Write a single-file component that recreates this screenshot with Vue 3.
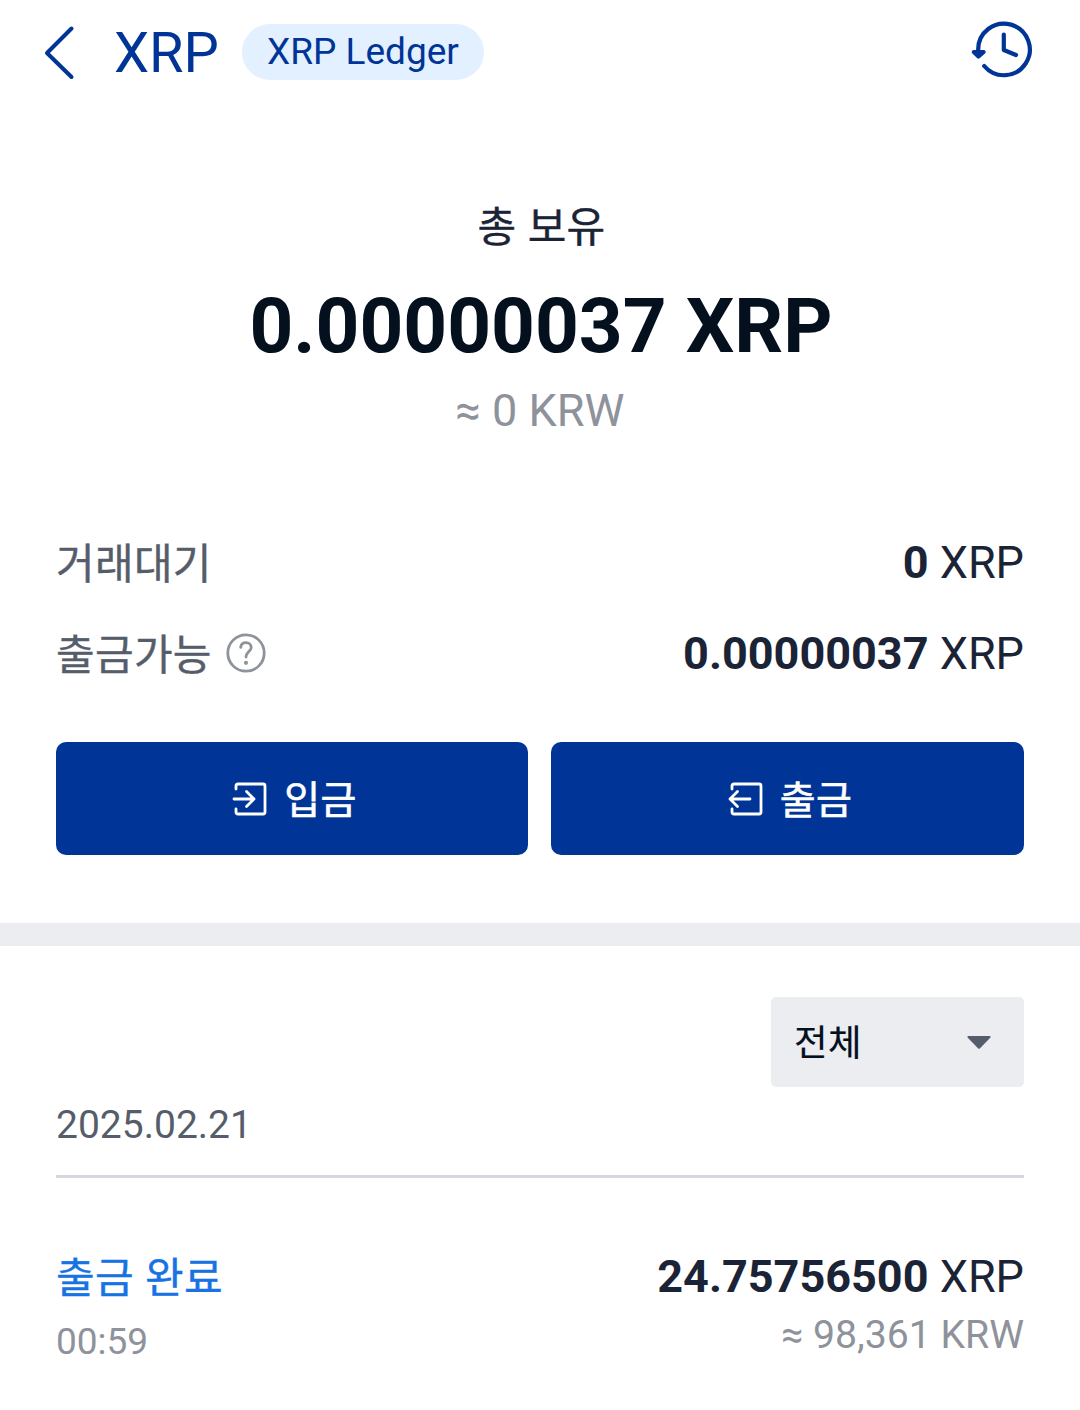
<template>
  <div class="wallet">
    <header class="header">
      <svg class="back" width="32" height="56" viewBox="0 0 32 56">
        <path d="M27.5 4.5 3 29 27.5 53" />
      </svg>
      <h1 class="title">{{ coin }}</h1>
      <span class="network">XRP Ledger</span>
      <svg class="history" width="64" height="60" viewBox="0 0 64 60">
        <path d="M8.2 33V29A25.8 25.8 0 1 1 14.2 45" />
        <path d="M33.8 13.5V29L46 34" />
        <path class="tip" d="M3.8 31 8.5 35.5 13.6 31Z" />
      </svg>
    </header>

    <section class="summary">
      <div class="summary-label ko">총 보유</div>
      <div class="summary-amount">0.00000037 {{ coin }}</div>
      <div class="summary-krw">≈ 0 KRW</div>
    </section>

    <section class="balances">
      <div v-for="row in balances" :key="row.label" class="row">
        <span class="row-label ko">{{ row.label }}</span>
        <svg v-if="row.help" class="help" width="40" height="40" viewBox="0 0 40 40">
          <circle cx="20" cy="20" r="18.2" />
          <path d="M14.7 14.3C15 11.3 17.2 9.6 20 9.6C23 9.6 25.2 11.6 25.2 14.4C25.2 18.3 20 19 20 24" />
          <circle class="dot" cx="20" cy="29.8" r="2.1" />
        </svg>
        <span class="row-value"><b>{{ row.value }}</b> {{ coin }}</span>
      </div>
    </section>

    <div class="actions">
      <button class="action">
        <svg width="36" height="36" viewBox="0 0 36 36">
          <path d="M4 8V5Q4 3 6 3H31Q33 3 33 5V31Q33 33 31 33H6Q4 33 4 31V28" />
          <path d="M2 18H22M14.5 10.5 22 18 14.5 25.5" />
        </svg>
        <span class="ko">입금</span>
      </button>
      <button class="action">
        <svg width="36" height="36" viewBox="0 0 36 36">
          <path d="M4 8V5Q4 3 6 3H31Q33 3 33 5V31Q33 33 31 33H6Q4 33 4 31V28" />
          <path d="M22 18H2M9.5 10.5 2 18 9.5 25.5" />
        </svg>
        <span class="ko">출금</span>
      </button>
    </div>

    <div class="divider"></div>

    <section class="records">
      <div class="filter">
        <span class="ko">전체</span>
        <svg width="24" height="14" viewBox="0 0 24 14">
          <path d="M1.5 0H22.5Q24.5 0.3 23 2L13 12.3Q12 13.3 11 12.3L1 2Q-0.5 0.3 1.5 0Z" />
        </svg>
      </div>
      <div class="date">2025.02.21</div>
      <div class="record">
        <div class="record-left">
          <div class="status ko">출금 완료</div>
          <div class="record-time">00:59</div>
        </div>
        <div class="record-right">
          <div class="row-value"><b>24.75756500</b> {{ coin }}</div>
          <div class="record-krw">≈ 98,361 KRW</div>
        </div>
      </div>
    </section>
  </div>
</template>

<script setup>
const coin = 'XRP'

const balances = [
  { label: '거래대기', value: '0' },
  { label: '출금가능', value: '0.00000037', help: true }
]
</script>

<style>
body {
  margin: 0;
  background: #fff;
}
</style>

<style scoped>
.wallet {
  width: 1080px;
  height: 1410px;
  overflow: hidden;
  background: #fff;
  color: #1b2436;
  font-family: Roboto, "Noto Sans CJK KR", sans-serif;
}

svg {
  display: block;
  flex: none;
  fill: none;
  stroke-linecap: round;
  stroke-linejoin: round;
}

/* hangul is set slightly heavier than the regular cut */
.ko {
  letter-spacing: 0.3px;
  word-spacing: 0.5px;
  -webkit-text-stroke: 0.4px currentColor;
}

.header {
  display: flex;
  align-items: center;
  height: 104px;
  padding: 0 46px 0 44px;
  color: #003597;
}

.back {
  stroke: #003597;
  stroke-width: 4;
}

.title {
  margin: 0 0 0 38px;
  padding-top: 2px;
  font-size: 56px;
  font-weight: 400;
  line-height: 80px;
}

.network {
  box-sizing: border-box;
  height: 56px;
  margin-left: 23px;
  padding: 0 25.5px 0 25px;
  border-radius: 28px;
  background: #e3f0ff;
  font-size: 37px;
  line-height: 55px;
}

.history {
  margin: 0 0 3px auto;
  stroke: #003597;
  stroke-width: 4.2;
}

.history .tip {
  fill: #003597;
}

.summary {
  padding-top: 92px;
  text-align: center;
}

.summary-label {
  padding: 2px 0 0 3px;
  font-size: 42px;
  line-height: 60px;
}

.summary-amount {
  margin-top: 23px;
  padding-left: 2px;
  color: #04101e;
  font-size: 76.5px;
  font-weight: 700;
  line-height: 90px;
}

.summary-krw {
  margin-top: 10px;
  color: #8e929b;
  font-size: 45px;
  line-height: 60px;
}

.balances {
  display: flex;
  flex-direction: column;
  gap: 31px;
  padding: 92px 56px 58px;
}

.row {
  display: flex;
  align-items: center;
  height: 60px;
}

.row-label {
  padding-top: 3px;
  color: #565d6a;
  font-size: 42px;
  line-height: 60px;
}

.help {
  margin: 0 0 3px 14px;
  stroke: #8e929b;
  stroke-width: 2.8;
}

.help .dot {
  fill: #8e929b;
  stroke: none;
}

.row-value {
  margin-left: auto;
  font-size: 45px;
  line-height: 60px;
}

.actions {
  display: grid;
  grid-template-columns: 472px 473px;
  gap: 23px;
  padding: 0 56px 68px;
}

.action {
  display: flex;
  align-items: center;
  justify-content: center;
  gap: 16px;
  height: 113px;
  padding: 0 0 0 5px;
  border: 0;
  border-radius: 10px;
  background: #003597;
  color: #fff;
  font-family: inherit;
  font-size: 39px;
  line-height: 60px;
}

.action svg {
  stroke: #fff;
  stroke-width: 2.8;
}

.action .ko {
  padding-top: 4px;
  -webkit-text-stroke-width: 0.6px;
}

.divider {
  height: 23px;
  background: #ecedf1;
}

.records {
  padding: 51px 56px 0;
}

.filter {
  display: flex;
  box-sizing: border-box;
  align-items: center;
  justify-content: space-between;
  width: 253px;
  height: 90px;
  margin-left: auto;
  padding: 2px 33px 0 23px;
  border-radius: 5px;
  background: #ecedf1;
  color: #04101e;
  font-size: 36.5px;
  line-height: 60px;
}

.filter .ko {
  padding-top: 2px;
  -webkit-text-stroke-width: 0.2px;
}

.filter svg {
  fill: #565d6a;
}

.date {
  padding: 13px 0 25px;
  border-bottom: 3px solid #d5d7dc;
  color: #565d6a;
  font-size: 39px;
  line-height: 50px;
}

.record {
  display: flex;
  justify-content: space-between;
  padding-top: 69px;
}

.status {
  padding-top: 2px;
  color: #1772e3;
  font-size: 42px;
  line-height: 60px;
}

.record-time {
  margin-top: 8px;
  color: #8e929b;
  font-size: 37px;
  line-height: 50px;
}

.record-right {
  text-align: right;
}

.record-krw {
  margin-top: 3px;
  color: #8e929b;
  font-size: 39.2px;
  line-height: 50px;
}
</style>
